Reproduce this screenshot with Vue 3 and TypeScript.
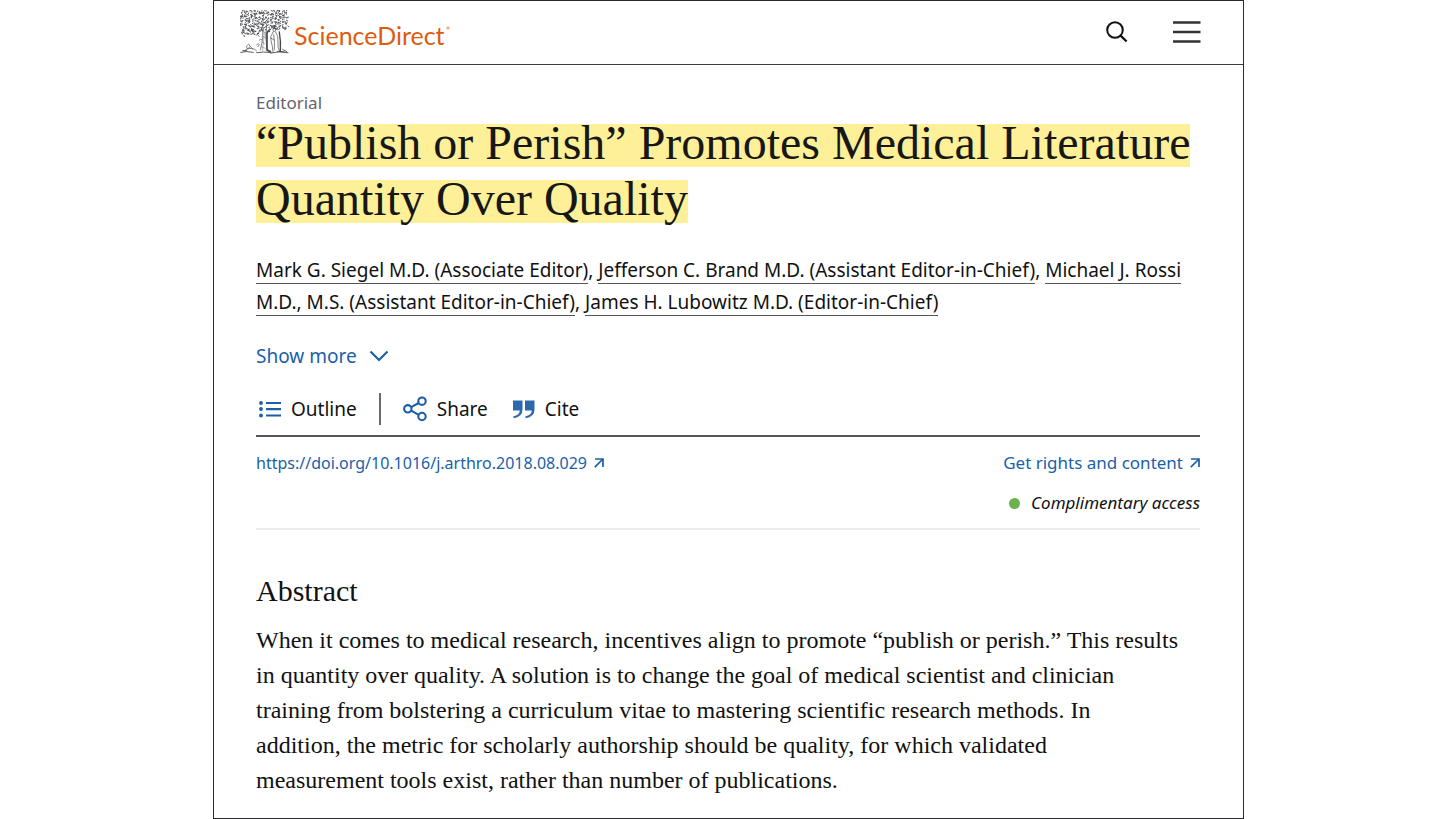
<script setup lang="ts">
interface Author {
  name: string
  breakAfter?: string
}

const titleLines: string[] = ['“Publish or Perish” Promotes Medical Literature', 'Quantity Over Quality']

const authors: Author[] = [
  { name: 'Mark G. Siegel M.D. (Associate Editor)' },
  { name: 'Jefferson C. Brand M.D. (Assistant Editor-in-Chief)' },
  { name: 'Michael J. Rossi', breakAfter: 'M.D., M.S. (Assistant Editor-in-Chief)' },
  { name: 'James H. Lubowitz M.D. (Editor-in-Chief)' },
]

const abstractLines: string[] = [
  'When it comes to medical research, incentives align to promote “publish or perish.” This results',
  'in quantity over quality. A solution is to change the goal of medical scientist and clinician',
  'training from bolstering a curriculum vitae to mastering scientific research methods. In',
  'addition, the metric for scholarly authorship should be quality, for which validated',
  'measurement tools exist, rather than number of publications.',
]

/* Small engraved curls that fill the crown of the emblem's tree. */
function foliage(): string {
  let seed = 11
  const rnd = (): number => {
    seed = (seed * 16807) % 2147483647
    return seed / 2147483647
  }
  const parts: string[] = []
  for (let y = 2; y < 84; y += 6) {
    for (let x = 2; x < 146; x += 6) {
      const inCrown = (y < 50 && x > 0) || (y < 58 && x > 24) || (y < 80 && x < 62 && x > 4)
      if (!inCrown) continue
      const px = Math.round(x + rnd() * 6 - 3)
      const py = Math.round(y + rnd() * 6 - 2)
      const dx = Math.round(rnd() * 12 - 6)
      const dy = Math.round(rnd() * 8 - 4)
      const cx = Math.round(rnd() * 10 - 5)
      const cy = Math.round(rnd() * 10 - 5)
      parts.push(`M${px} ${py}q${cx} ${cy} ${dx} ${dy}`)
    }
  }
  return parts.join('')
}

const crown: string = foliage()
</script>

<template>
  <div class="page">
    <header class="bar">
      <a class="brand" href="#" aria-label="ScienceDirect home">
        <svg class="emblem" viewBox="0 0 147 132" aria-hidden="true">
          <g fill="none" stroke="#45474d" stroke-linecap="round">
            <path :d="crown" stroke-width="2.8" />
            <g transform="translate(-4 0)">
              <path d="M69 54q5 14 3 30t-7 36M84 52q-5 20-2 36t1 34" stroke-width="2" />
              <path d="M75 58q3 18 0 34t-3 30M70 62l8 6M72 78l8 6M70 96l9 6M68 110l11 5" stroke-width="1.2" />
              <path d="M62 66q8-2 8-12M84 66q6-6 12-8" stroke-width="2.5" />
              <path d="M84 74q3-14 8-10M85 76v40q1 8 10 8" stroke-width="5" />
              <path d="M106 52q7 0 6 7t-8 5q-4-6 2-12M103 66q-10 14-6 26t6 34M111 66q9 12 7 30t4 26M105 74q4 22 2 46M96 84l10 6" stroke-width="2" />
              <path d="M122 66q5 28 3 58" stroke-width="4" />
            </g>
            <path d="M50 104q6-6 8 0l-4 6M58 90q5-6 8 0M20 108l6-6 5 8-8 6zM14 122q8-8 20-7t16 8M32 110l6 8" stroke-width="2" />
            <path d="M2 127q18-5 38 0M50 128q20-4 44 0M92 129q22-6 52-1M8 122h12M112 124l20 1M128 118l12 7" stroke-width="2.600" />
          </g>
        </svg>
        <span class="wordmark">ScienceDirect</span>
        <svg class="mark" viewBox="0 0 4 4" aria-hidden="true"><circle cx="2" cy="2" r="1.2" fill="none" stroke="#e9711c" stroke-width=".7" /></svg>
      </a>
      <nav class="tools" aria-label="Site">
        <button type="button" aria-label="Search">
          <svg width="22" height="22" viewBox="0 0 22 22" fill="none" stroke="#111" stroke-width="2">
            <circle cx="9" cy="9" r="7.8" />
            <path d="M14.6 14.6l6 5.9" stroke-width="2.3" />
          </svg>
        </button>
        <button type="button" aria-label="Menu">
          <svg width="28" height="22" viewBox="0 0 28 22" fill="none" stroke="#333" stroke-width="2.4">
            <path d="M0 1.5h27.500M0 11h27.500M0 20.500h27.500" />
          </svg>
        </button>
      </nav>
    </header>

    <main class="article">
      <p class="kind">Editorial</p>
      <h1 class="title">
        <span class="highlight"><template v-for="(line, i) in titleLines" :key="i"><br v-if="i" />{{ line }}</template></span>
      </h1>

      <p class="authors">
        <template v-for="(a, i) in authors" :key="a.name"><a href="#">{{ a.name }}<template v-if="a.breakAfter"><br />{{ a.breakAfter }}</template></a><template v-if="i < authors.length - 1">, </template></template>
      </p>

      <button type="button" class="more">
        Show more
        <svg width="20" height="12" viewBox="0 0 20 12" fill="none" stroke="#1a5fa8" stroke-width="2.200"><path d="M1.500 1.500l8.500 8.500 8.500-8.500" /></svg>
      </button>

      <div class="actions">
        <button type="button" class="outline">
          <svg width="22" height="18" viewBox="0 0 22 18" fill="#1a5fa8">
            <circle cx="2" cy="3" r="1.900" /><circle cx="2" cy="9" r="1.900" /><circle cx="2" cy="15.500" r="1.900" />
            <path d="M7 2h15v2.100H7zM7 8.100h15v2.100H7zM7 14.400h15v2.100H7z" />
          </svg>
          Outline
        </button>
        <span class="divider"></span>
        <button type="button" class="share">
          <svg width="24" height="26" viewBox="0 0 24 26" fill="none" stroke="#1a5fa8" stroke-width="2.100">
            <circle cx="4.800" cy="12.800" r="3.700" /><circle cx="19" cy="5.200" r="3.700" /><circle cx="19" cy="20.500" r="3.700" />
            <path d="M8.200 11.200l7.500-4.200M8.200 14.600l7.500 4.200" />
          </svg>
          Share
        </button>
        <button type="button" class="cite">
          <svg width="22" height="19" viewBox="0 0 22 19">
            <path d="M0 .5h9.500v9q0 7.500-9 8.700v-2q6-1 6.300-5.700H0zM12 .5h9.500v9q0 7.500-9 8.700v-2q6-1 6.300-5.700H12z" fill="#2a69ad" />
          </svg>
          Cite
        </button>
      </div>

      <div class="links">
        <a class="link doi" href="#">https://doi.org/10.1016/j.arthro.2018.08.029
          <svg width="10" height="10" viewBox="0 0 10 10" fill="none" stroke="#1a5fa8" stroke-width="1.700"><path d="M1 1h8v8M9 1L.8 9.200" /></svg>
        </a>
        <div class="rights">
          <a class="link" href="#">Get rights and content
            <svg width="10" height="10" viewBox="0 0 10 10" fill="none" stroke="#1a5fa8" stroke-width="1.700"><path d="M1 1h8v8M9 1L.8 9.200" /></svg>
          </a>
          <p class="access"><span class="dot"></span>Complimentary access</p>
        </div>
      </div>

      <section class="abstract">
        <h2>Abstract</h2>
        <p><template v-for="(line, i) in abstractLines" :key="i"><br v-if="i" />{{ line }}</template></p>
      </section>
    </main>
  </div>
</template>

<style>
body {
  margin: 0;
  background: #fff;
}
</style>

<style scoped>
.page {
  box-sizing: border-box;
  min-height: 100vh;
  margin: 0 212px 0 213px;
  border: 1px solid #2b2b2e;
  background: #fff;
  color: #111;
  font-family: "Noto Sans", "Open Sans", sans-serif;
  font-size: 19px;
}
p, h1, h2 {
  margin: 0;
  font-weight: 400;
}
button {
  display: flex;
  align-items: center;
  padding: 0;
  border: 0;
  background: none;
  color: inherit;
  font: inherit;
}
a {
  color: inherit;
  text-decoration: none;
}
svg {
  flex: none;
}
.bar {
  box-sizing: border-box;
  display: flex;
  align-items: center;
  justify-content: space-between;
  height: 64px;
  padding: 0 42px 2px 26px;
  border-bottom: 1px solid #3c3c40;
}
.brand {
  display: flex;
  align-items: center;
}
.emblem {
  width: 49px;
  height: 44px;
}
.wordmark {
  margin: 6px 0 0 5px;
  color: #dd5b10;
  font-family: Lato, "Noto Sans", sans-serif;
  font-size: 25px;
  line-height: 32px;
}
.mark {
  width: 4px;
  height: 4px;
  margin: 0 0 8px 1px;
}
.tools {
  display: flex;
  align-items: center;
  gap: 45px;
}
.article {
  padding: 26px 43px 20px 42px;
}
.kind {
  color: #646468;
  font-size: 17px;
  line-height: 24px;
}
.title {
  color: #171717;
  font-family: "Liberation Serif", serif;
  font-size: 48px;
  line-height: 56px;
  white-space: nowrap;
}
.highlight {
  background: linear-gradient(#fdf098, #fdf098) 0 8px / 100% 43px no-repeat;
  -webkit-box-decoration-break: clone;
  box-decoration-break: clone;
}
.authors {
  margin-top: 27px;
  line-height: 32px;
  white-space: nowrap;
}
.authors a {
  border-bottom: 1px solid #55555a;
}
.more {
  gap: 12px;
  margin-top: 22px;
  color: #1a5fa8;
  line-height: 32px;
}
.actions {
  display: flex;
  align-items: center;
  margin-top: 21px;
  padding-bottom: 10px;
  border-bottom: 2px solid #55555a;
}
.outline {
  gap: 10px;
  padding-left: 3px;
}
.divider {
  width: 2px;
  height: 32px;
  margin: 0 22px;
  background: #6a6a6e;
}
.share {
  gap: 10px;
}
.cite {
  gap: 10px;
  margin-left: 25px;
}
.links {
  display: flex;
  align-items: flex-start;
  justify-content: space-between;
  padding: 14px 0 13px;
  border-bottom: 2px solid #ececec;
  font-size: 17px;
  line-height: 24px;
}
.link {
  display: flex;
  align-items: center;
  gap: 7px;
  color: #1a5fa8;
}
.doi {
  font-size: 16px;
}
.rights {
  display: flex;
  flex-direction: column;
  align-items: flex-end;
  gap: 16px;
}
.access {
  display: flex;
  align-items: center;
  gap: 11px;
  font-style: italic;
}
.dot {
  width: 11px;
  height: 11px;
  border-radius: 50%;
  background: #69b34f;
}
.abstract {
  margin-top: 43px;
  font-family: "Liberation Serif", serif;
}
.abstract h2 {
  font-size: 30px;
  line-height: 36px;
}
.abstract p {
  margin-top: 14px;
  font-size: 24px;
  line-height: 35px;
  white-space: nowrap;
}
</style>
